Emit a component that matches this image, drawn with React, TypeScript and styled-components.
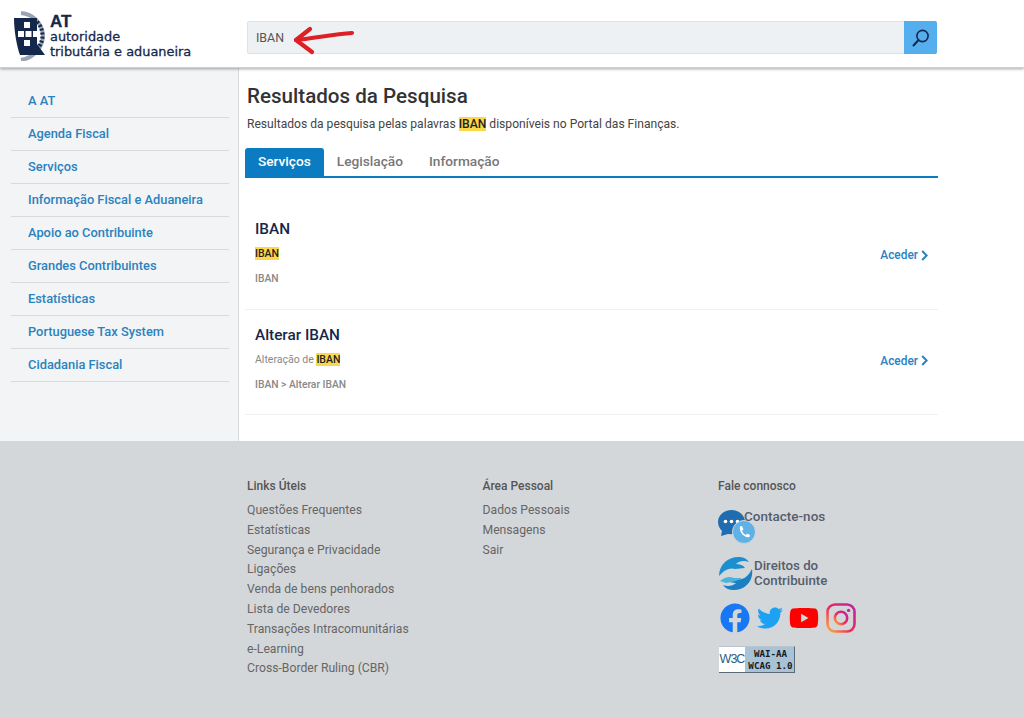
import React from "react"
import styled, { createGlobalStyle } from "styled-components"
import { FaFacebook, FaTwitter, FaYoutube } from "react-icons/fa"

const GlobalStyle = createGlobalStyle`
  * { box-sizing: border-box; }
  html, body { margin: 0; padding: 0; background: #fff; }
  body { font-family: Roboto, "Liberation Sans", sans-serif; }
`

const sideLinks = [
  "A AT",
  "Agenda Fiscal",
  "Serviços",
  "Informação Fiscal e Aduaneira",
  "Apoio ao Contribuinte",
  "Grandes Contribuintes",
  "Estatísticas",
  "Portuguese Tax System",
  "Cidadania Fiscal",
]

const usefulLinks = [
  "Questões Frequentes",
  "Estatísticas",
  "Segurança e Privacidade",
  "Ligações",
  "Venda de bens penhorados",
  "Lista de Devedores",
  "Transações Intracomunitárias",
  "e-Learning",
  "Cross-Border Ruling (CBR)",
]

const personalLinks = ["Dados Pessoais", "Mensagens", "Sair"]

const Page = styled.div`
  width: 1024px;
  height: 718px;
  display: flex;
  flex-direction: column;
  overflow: hidden;
`

const Header = styled.header`
  height: 68px;
  flex: none;
  display: flex;
  align-items: flex-start;
  background: #fff;
  border-bottom: 1px solid #d0d0d0;
  box-shadow: 0 1px 3px rgba(0, 0, 0, 0.35);
  position: relative;
  z-index: 2;
`

const Logo = styled.div`
  width: 247px;
  flex: none;
  display: flex;
  padding: 11px 0 0 13px;
`

const LogoWords = styled.div`
  font-family: "DejaVu Sans", sans-serif;
  font-size: 12.9px;
  line-height: 15px;
  color: #14284b;
  -webkit-text-stroke: 0.3px #14284b;
  white-space: nowrap;
`

const LogoAt = styled.div`
  font-family: "Liberation Sans", sans-serif;
  font-size: 17px;
  font-weight: 700;
  line-height: 15px;
  margin-top: 3px;
`

const SearchBar = styled.div`
  width: 690px;
  height: 33px;
  margin-top: 21px;
  display: flex;
  position: relative;
  background: #eef1f4;
  border: 1px solid #dfe2e5;
  border-radius: 2px;
`

const SearchText = styled.div`
  flex: 1;
  padding-left: 8px;
  font-size: 12.4px;
  line-height: 31px;
  color: #555;
`

const SearchButton = styled.div`
  width: 33px;
  margin: -1px;
  display: flex;
  align-items: center;
  justify-content: center;
  background: #55aeee;
  border-radius: 0 2px 2px 0;
`

const Arrow = styled.svg`
  position: absolute;
  left: 44px;
  top: 3px;
`

const Main = styled.div`
  height: 373px;
  flex: none;
  display: flex;
`

const Sidebar = styled.nav`
  width: 239px;
  flex: none;
  padding: 17px 9px 0 11px;
  background: #f3f4f5;
  border-right: 1px solid #d9dbdd;
`

const SideLink = styled.div`
  height: 33px;
  padding-left: 17px;
  font-size: 12.85px;
  font-weight: 500;
  line-height: 31px;
  color: #2a82bf;
  border-bottom: 1px solid #d8dadc;
`

const Content = styled.main`
  width: 693px;
  margin-left: 6px;
`

const Title = styled.h1`
  margin: 16px 0 0 2px;
  font-size: 20.6px;
  font-weight: 500;
  line-height: 24px;
  color: #333;
`

const Intro = styled.p`
  margin: 8px 0 0 2px;
  font-size: 12.1px;
  line-height: 16px;
  color: #444;
`

const Mark = styled.mark`
  background: #fbd84a;
  color: #222;
  font-weight: 500;
`

const Tabs = styled.div`
  height: 30px;
  margin-top: 16px;
  display: flex;
  border-bottom: 2px solid #0b7cc1;
`

const Tab = styled.div<{ $active?: boolean }>`
  height: 28px;
  padding: 0 13px;
  font-size: 13.7px;
  font-weight: 500;
  line-height: 26px;
  color: ${p => (p.$active ? "#fff" : "#777")};
  background: ${p => (p.$active ? "#0b7cc1" : "transparent")};
  border-radius: 3px 3px 0 0;
`

const Results = styled.div`
  padding-top: 26px;
`

const Result = styled.div`
  height: 105.5px;
  padding: 16px 9px 0 10px;
  display: flex;
  align-items: center;
  border-bottom: 1px solid #f0f0f0;
`

const ResultBody = styled.div`
  flex: 1;
  align-self: flex-start;
`

const ResultTitle = styled.div`
  font-size: 15.3px;
  font-weight: 500;
  line-height: 18px;
  color: #14284b;
`

const ResultText = styled.div`
  margin-top: 9px;
  font-size: 10.5px;
  line-height: 14px;
  color: #888;
`

const ResultPath = styled.div`
  margin-top: 11px;
  font-size: 10.3px;
  font-weight: 500;
  line-height: 14px;
  color: #888;
`

const Access = styled.div`
  display: flex;
  align-items: center;
  gap: 3px;
  font-size: 11.9px;
  font-weight: 500;
  color: #2a82bf;
  margin: -18px 1px 0 0;
`

const Footer = styled.footer`
  flex: 1;
  display: flex;
  padding: 37px 0 0 247px;
  background: #d4d7da;
`

const FooterColumn = styled.div`
  width: 235.5px;
`

const FooterTitle = styled.div`
  font-size: 12px;
  font-weight: 500;
  line-height: 16px;
  color: #555;
  margin-bottom: 7px;
`

const FooterLink = styled.div`
  font-size: 12.2px;
  line-height: 19.8px;
  color: #666;
`

const ContactRow = styled.div`
  display: flex;
  align-items: flex-start;
  margin-top: 15px;
  font-size: 13.5px;
  font-weight: 500;
  line-height: 14.5px;
  color: #555e6d;
`

const ContactLabel = styled.span`
  margin-left: -12px;
`

const RightsRow = styled(ContactRow)`
  margin-top: 11px;
  align-items: center;
  gap: 1px;
  font-size: 13.3px;
`

const SocialRow = styled.div`
  display: flex;
  align-items: center;
  gap: 6.5px;
  margin: 12px 0 0 2px;
`

const W3cBadge = styled.div`
  width: 76px;
  height: 27px;
  margin: 13px 0 0 1px;
  display: flex;
  background: #a9c3d6;
  border-top: 1px solid #b9c4cc;
  border-right: 1px solid #5b6a76;
  border-bottom: 1px solid #5b6a76;
`

const W3cMark = styled.div`
  width: 26px;
  background: #fff;
  color: #2a5d86;
  font-family: "Liberation Sans", sans-serif;
  font-size: 12.5px;
  letter-spacing: -1px;
  line-height: 25px;
  text-align: center;
`

const W3cText = styled.div`
  flex: 1;
  font-family: "DejaVu Sans Mono", monospace;
  font-size: 9.2px;
  font-weight: 700;
  line-height: 11.5px;
  padding: 1px 0 0 2px;
  text-align: center;
  white-space: nowrap;
  color: #1a1a1a;
`

const SearchIcon = () => (
  <svg width="20" height="20" viewBox="0 0 20 20" fill="none" stroke="#14284b" strokeWidth="1.6">
    <circle cx="11.5" cy="8" r="5.6" />
    <path d="M7.5 12 L2.5 17.5" strokeWidth="2" strokeLinecap="round" />
  </svg>
)

const RedArrow = () => (
  <Arrow width="66" height="30" viewBox="0 0 66 30" fill="none" stroke="#dd1f26" strokeWidth="4.2" strokeLinecap="round" strokeLinejoin="round">
    <path d="M60 8 C44 9 22 13 4 15" />
    <path d="M18 4 L4 15 L20 27" />
  </Arrow>
)

const Chevron = () => (
  <svg width="7" height="11" viewBox="0 0 7 11" fill="none" stroke="#2a82bf" strokeWidth="2">
    <path d="M1.2 1 L5.7 5.5 L1.2 10" />
  </svg>
)

const Shield = () => (
  <svg width="37" height="50" viewBox="0 0 37 50" style={{ flex: "none" }}>
    <path d="M8 2 C20 3 29 12 30 24 C30 37 20 47 8 49" fill="none" stroke="#9aa3b2" strokeWidth="4" />
    <path d="M24 11 C28 15 29 19 29.5 24 C29.5 29 28 33 25 37" fill="none" stroke="#14284b" strokeWidth="4" strokeDasharray="2 2" />
    <path d="M1 7 H24 V33 L32 44 H7 C4 36 1 20 1 7 Z" fill="#14284b" />
    <g fill="#fff">
      <rect x="11" y="11" width="6" height="6" />
      <rect x="5" y="20" width="6" height="6" />
      <rect x="12.5" y="20" width="6" height="6" />
      <rect x="20" y="20" width="4" height="6" />
      <rect x="11" y="29" width="6" height="6" />
    </g>
  </svg>
)

const ChatIcon = () => (
  <svg width="38" height="36" viewBox="0 0 38 36" style={{ flex: "none" }}>
    <path d="M13.5 1 C6 1 0 6 0 13 C0 17 2 20 4 22 L3 27 L10 25 C16 26 24 22 27 13 C27 6 21 1 13.5 1 Z" fill="#1f6db0" />
    <circle cx="7.5" cy="12.5" r="1.8" fill="#fff" />
    <circle cx="13.5" cy="12.5" r="1.8" fill="#fff" />
    <circle cx="19.5" cy="12.5" r="1.8" fill="#fff" />
    <circle cx="26" cy="23" r="11.5" fill="#5fb1e6" stroke="#d4d7da" strokeWidth="1" />
    <path d="M22 17.5 L24 17 L25.5 20.5 L24 21.5 C24.5 23.5 26 25 28 26 L29 24.5 L32 26 L31.5 28 C27 29.5 20.5 23 22 17.5 Z" fill="#fff" />
  </svg>
)

const RightsIcon = () => (
  <svg width="35" height="35" viewBox="0 0 35 35" style={{ flex: "none" }}>
    <path d="M1 20 C1 8 11 0 22 1 C26 1.5 29 3 31 6 C26 4 21 5 18 8 C22 8 25 9 27 12 L17 13 C12 11 6 14 1 20 Z" fill="#1c8fd0" />
    <path d="M34 13 C36 26 26 35 14 34 C10 33.5 7 32 5 29 C10 31 15 30 18 27 C14 27 11 26 9 24 L18 23 C24 25 30 21 34 13 Z" fill="#1b7fc4" />
    <path d="M2 25 C7 21 12 20 16 22 L24 22 C20 25 14 26 8 27 Z" fill="#4bb4dd" />
  </svg>
)

const InstagramIcon = () => (
  <svg width="30" height="30" viewBox="0 0 30 30" fill="none">
    <defs>
      <linearGradient id="insta" x1="0" y1="1" x2="1" y2="0">
        <stop offset="0" stopColor="#fdb13b" />
        <stop offset="0.45" stopColor="#ee2a5b" />
        <stop offset="1" stopColor="#b824a8" />
      </linearGradient>
    </defs>
    <rect x="1.5" y="1.5" width="27" height="27" rx="7.5" stroke="url(#insta)" strokeWidth="2.6" />
    <circle cx="15" cy="15" r="6.2" stroke="url(#insta)" strokeWidth="2.6" />
    <circle cx="22.6" cy="7.4" r="1.7" fill="#c9278f" />
  </svg>
)

const App = () => (
  <Page>
    <GlobalStyle />
    <Header>
      <Logo>
        <Shield />
        <LogoWords>
          <LogoAt>AT</LogoAt>
          <div>autoridade</div>
          <div>tributária e aduaneira</div>
        </LogoWords>
      </Logo>
      <SearchBar>
        <SearchText>IBAN</SearchText>
        <RedArrow />
        <SearchButton>
          <SearchIcon />
        </SearchButton>
      </SearchBar>
    </Header>
    <Main>
      <Sidebar>
        {sideLinks.map(link => (
          <SideLink key={link}>{link}</SideLink>
        ))}
      </Sidebar>
      <Content>
        <Title>Resultados da Pesquisa</Title>
        <Intro>
          Resultados da pesquisa pelas palavras <Mark>IBAN</Mark> disponíveis no Portal das Finanças.
        </Intro>
        <Tabs>
          <Tab $active>Serviços</Tab>
          <Tab>Legislação</Tab>
          <Tab>Informação</Tab>
        </Tabs>
        <Results>
          <Result>
            <ResultBody>
              <ResultTitle>IBAN</ResultTitle>
              <ResultText>
                <Mark>IBAN</Mark>
              </ResultText>
              <ResultPath>IBAN</ResultPath>
            </ResultBody>
            <Access>
              Aceder <Chevron />
            </Access>
          </Result>
          <Result>
            <ResultBody>
              <ResultTitle>Alterar IBAN</ResultTitle>
              <ResultText>
                Alteração de <Mark>IBAN</Mark>
              </ResultText>
              <ResultPath>IBAN &gt; Alterar IBAN</ResultPath>
            </ResultBody>
            <Access>
              Aceder <Chevron />
            </Access>
          </Result>
        </Results>
      </Content>
    </Main>
    <Footer>
      <FooterColumn>
        <FooterTitle>Links Úteis</FooterTitle>
        {usefulLinks.map(link => (
          <FooterLink key={link}>{link}</FooterLink>
        ))}
      </FooterColumn>
      <FooterColumn>
        <FooterTitle>Área Pessoal</FooterTitle>
        {personalLinks.map(link => (
          <FooterLink key={link}>{link}</FooterLink>
        ))}
      </FooterColumn>
      <FooterColumn>
        <FooterTitle>Fale connosco</FooterTitle>
        <ContactRow>
          <ChatIcon />
          <ContactLabel>Contacte-nos</ContactLabel>
        </ContactRow>
        <RightsRow>
          <RightsIcon />
          <div>
            Direitos do
            <br />
            Contribuinte
          </div>
        </RightsRow>
        <SocialRow>
          <FaFacebook size={30} color="#1877f2" />
          <FaTwitter size={26} color="#1da1f2" />
          <FaYoutube size={30} color="#f00" />
          <InstagramIcon />
        </SocialRow>
        <W3cBadge>
          <W3cMark>W3C</W3cMark>
          <W3cText>
            WAI-AA
            <br />
            WCAG 1.0
          </W3cText>
        </W3cBadge>
      </FooterColumn>
    </Footer>
  </Page>
)

export default App
